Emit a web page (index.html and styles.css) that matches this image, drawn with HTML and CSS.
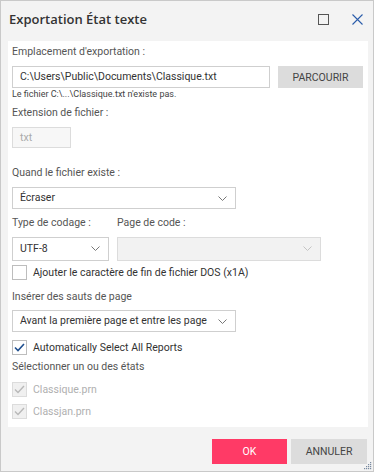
FILE: index.html
```html
<!DOCTYPE html>
<html lang="fr">
<head>
<meta charset="UTF-8">
<title>Exportation État texte</title>
<link rel="stylesheet" href="styles.css">
</head>
<body>

<div class="dialog">
    <header class="titlebar">
        <h1>Exportation État texte</h1>
        <div class="win-btns">
            <svg class="ico-max" width="11" height="11" viewBox="0 0 11 11"><rect x="0.5" y="0.5" width="10" height="10" fill="none" stroke="#555" stroke-width="1"/></svg>
            <svg class="ico-close" width="11" height="11" viewBox="0 0 11 11"><path d="M0.5 0.5 L10.5 10.5 M10.5 0.5 L0.5 10.5" stroke="#2a5caa" stroke-width="1.1" fill="none"/></svg>
        </div>
    </header>

    <main class="panel">
        <label class="lbl first">Emplacement d'exportation :</label>
        <div class="row-path">
            <div class="field path">C:\Users\Public\Documents\Classique.txt</div>
            <button class="btn gray browse">PARCOURIR</button>
        </div>
        <p class="note">Le fichier C:\...\Classique.txt n'existe pas.</p>

        <label class="lbl">Extension de fichier :</label>
        <div class="field ext">txt</div>

        <label class="lbl gap">Quand le fichier existe :</label>
        <div class="field select wide">Écraser
            <svg class="chev" width="9" height="5" viewBox="0 0 9 5"><path d="M0.5 0.5 L4.5 4.5 L8.5 0.5" stroke="#777" fill="none"/></svg>
        </div>

        <div class="row-code">
            <div class="col">
                <label class="lbl">Type de codage :</label>
                <div class="field select utf">UTF-8
                    <svg class="chev" width="9" height="5" viewBox="0 0 9 5"><path d="M0.5 0.5 L4.5 4.5 L8.5 0.5" stroke="#777" fill="none"/></svg>
                </div>
            </div>
            <div class="col">
                <label class="lbl">Page de code :</label>
                <div class="field select disabled codepage">
                    <svg class="chev" width="9" height="5" viewBox="0 0 9 5"><path d="M0.5 0.5 L4.5 4.5 L8.5 0.5" stroke="#c4c4c4" fill="none"/></svg>
                </div>
            </div>
        </div>

        <div class="check dos"><span class="box"></span>Ajouter le caractère de fin de fichier DOS (x1A)</div>

        <label class="lbl breaks">Insérer des sauts de page</label>
        <div class="field select wide">Avant la première page et entre les page
            <svg class="chev" width="9" height="5" viewBox="0 0 9 5"><path d="M0.5 0.5 L4.5 4.5 L8.5 0.5" stroke="#777" fill="none"/></svg>
        </div>

        <div class="check auto"><span class="box"><svg width="11" height="9" viewBox="0 0 11 9"><path d="M1 4.5 L4 7.5 L10 1" stroke="#1f4f8f" stroke-width="1.6" fill="none"/></svg></span>Automatically Select All Reports</div>

        <label class="lbl">Sélectionner un ou des états</label>
        <div class="check off first-report"><span class="box"><svg width="11" height="9" viewBox="0 0 11 9"><path d="M1 4.5 L4 7.5 L10 1" stroke="#b8b8b8" stroke-width="1.4" fill="none"/></svg></span>Classique.prn</div>
        <div class="check off"><span class="box"><svg width="11" height="9" viewBox="0 0 11 9"><path d="M1 4.5 L4 7.5 L10 1" stroke="#b8b8b8" stroke-width="1.4" fill="none"/></svg></span>Classjan.prn</div>
    </main>

    <footer class="actions">
        <button class="btn ok">OK</button>
        <button class="btn gray cancel">ANNULER</button>
        <svg class="grip" width="8" height="8" viewBox="0 0 8 8" fill="#7a8aa0">
            <rect x="6" y="0" width="1.2" height="1.2"/>
            <rect x="4" y="2" width="1.2" height="1.2"/><rect x="6" y="2" width="1.2" height="1.2"/>
            <rect x="2" y="4" width="1.2" height="1.2"/><rect x="4" y="4" width="1.2" height="1.2"/><rect x="6" y="4" width="1.2" height="1.2"/>
            <rect x="0" y="6" width="1.2" height="1.2"/><rect x="2" y="6" width="1.2" height="1.2"/><rect x="4" y="6" width="1.2" height="1.2"/><rect x="6" y="6" width="1.2" height="1.2"/>
        </svg>
    </footer>
</div>

</body>
</html>
```

FILE: styles.css
```css
:root {
    --frame: #c9c9c9;
    --bg: #f3f3f3;
    --text: #333;
    --label: #555;
    --border: #cfcfcf;
    --accent: #ff3a66;
}

body {
    margin: 0;
    background: #fff;
    font-family: 'Roboto', 'Open Sans', sans-serif;
    color: var(--text);
}

.dialog {
    width: 372px;
    height: 470px;
    border: 1px solid var(--frame);
    background: var(--bg);
    display: flex;
    flex-direction: column;
}

.titlebar {
    box-sizing: border-box;
    height: 40px;
    display: flex;
    align-items: center;
    justify-content: space-between;
    padding: 0 10px 4px 8px;
}

.titlebar h1 {
    margin: 0;
    font-family: 'Open Sans', sans-serif;
    font-size: 13px;
    font-weight: 600;
    color: #333;
}

.win-btns {
    display: flex;
    gap: 23px;
    align-items: center;
}

.win-btns svg {
    display: block;
}

.panel {
    background: #fff;
    margin: 0 5px 0 7px;
    padding: 0 4px;
    height: 386px;
    display: flex;
    flex-direction: column;
    align-items: flex-start;
}

.lbl {
    display: block;
    font-size: 10.5px;
    color: var(--label);
    line-height: 16px;
    margin-top: 4px;
    margin-bottom: 6px;
}

.lbl.first {
    margin-top: 3px;
    margin-bottom: 6px;
}

.lbl.gap {
    margin-top: 17px;
}

.lbl.breaks {
    margin-top: 9px;
    margin-bottom: 5px;
}

.row-path {
    display: flex;
    gap: 8px;
    width: 100%;
}

.field {
    box-sizing: border-box;
    height: 22px;
    border: 1px solid var(--border);
    background: #fff;
    font-size: 10.5px;
    line-height: 20px;
    padding: 0 7px;
    color: var(--text);
    position: relative;
}

.field.path {
    width: 258px;
}

.btn {
    border: none;
    font-family: inherit;
    font-size: 10.5px;
    color: #444;
    cursor: pointer;
}

.btn.gray {
    background: #dcdcdc;
}

.browse {
    width: 85px;
    height: 22px;
}

.note {
    margin: 0 0 1px 0;
    font-size: 9px;
    line-height: 12px;
    color: #444;
}

.field.ext {
    width: 59px;
    height: 21px;
    background: #f7f7f7;
    border-color: #dcdcdc;
    color: #aaa;
}

.select .chev {
    position: absolute;
    right: 8px;
    top: 8px;
}

.field.wide {
    width: 224px;
}

.row-code {
    display: flex;
    gap: 8px;
    margin-top: 2px;
}

.field.utf {
    width: 97px;
    height: 24px;
    line-height: 22px;
}

.field.codepage {
    width: 204px;
    height: 24px;
}

.field.disabled {
    background: #f2f2f2;
    border-color: #dcdcdc;
}

.check {
    display: flex;
    align-items: center;
    gap: 6px;
    font-size: 10.5px;
    color: var(--text);
    height: 16px;
    margin-top: 4px;
}

.check .box {
    box-sizing: border-box;
    width: 15px;
    height: 15px;
    border: 1px solid #bdbdbd;
    display: flex;
    align-items: center;
    justify-content: center;
    background: #fff;
}

.check.dos {
    margin-top: 3px;
}

.check.auto {
    margin-top: 7px;
}

.check.off {
    color: #b0b0b0;
    margin-top: 6px;
}

.check.first-report {
    margin-top: 0;
}

.check.off .box {
    background: #f0f0f0;
    border-color: #dcdcdc;
}

.actions {
    flex: 1;
    display: flex;
    justify-content: flex-end;
    align-items: center;
    gap: 4px;
    padding: 5px 6px 0 0;
    position: relative;
}

.btn.ok {
    width: 75px;
    height: 25px;
    background: var(--accent);
    color: #fff;
}

.btn.cancel {
    width: 76px;
    height: 25px;
}

.grip {
    position: absolute;
    right: 1px;
    bottom: 1px;
}
```
